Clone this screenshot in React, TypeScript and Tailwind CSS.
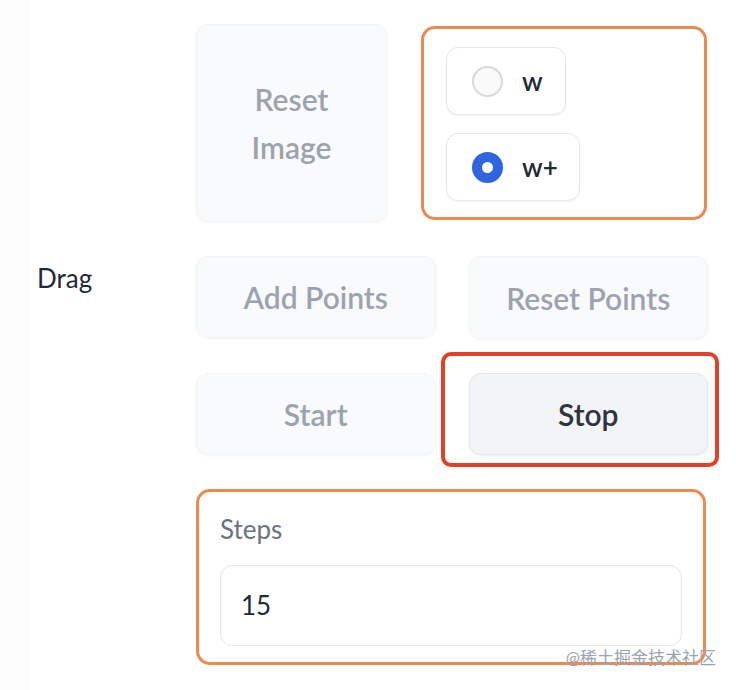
import React from "react";

const font = { fontFamily: "Lato, 'Noto Sans', 'Noto Sans CJK SC', sans-serif" };

type BtnProps = {
  label: React.ReactNode;
  active?: boolean;
  className?: string;
};

const Btn = ({ label, active, className }: BtnProps) => (
  <button
    className={
      "flex items-center justify-center rounded-[12px] border text-[30px] font-semibold leading-[48px] " +
      (active
        ? "border-[#e5e7eb] bg-[#f3f4f6] text-[#2f3441] shadow-[0_1px_3px_rgba(0,0,0,0.08)] "
        : "border-[#f3f4f6] bg-[#f9fafb] text-[#9ca3af] shadow-[0_1px_3px_rgba(0,0,0,0.04)] ") +
      (className ?? "")
    }
  >
    {label}
  </button>
);

const Radio = ({ label, checked, width }: { label: string; checked?: boolean; width: string }) => (
  <label
    className={
      "flex h-[68px] items-center gap-[19px] rounded-[12px] border border-[#e5e7eb] bg-white pl-[25px] shadow-[0_1px_2px_rgba(0,0,0,0.05)] " +
      width
    }
  >
    {checked ? (
      <span className="flex size-[31px] items-center justify-center rounded-full bg-[#2f66e0]">
        <span className="size-[11px] rounded-full bg-white" />
      </span>
    ) : (
      <span className="size-[31px] rounded-full border-2 border-[#d7d9dd] bg-[#fafafa]" />
    )}
    <span className="text-[26px] font-semibold text-[#1f2937]">{label}</span>
  </label>
);

export default function App() {
  return (
    <div className="flex h-[690px] w-[736px] bg-white" style={font}>
      <div className="w-[31px] bg-[#fcfcfc]" />
      <div className="flex w-[165px] items-start pt-[259px] pl-[6px]">
        <span className="text-[26px] text-[#1f2937]">Drag</span>
      </div>
      <div className="relative flex w-[512px] flex-col gap-[34px] pt-[24px]">
        <div className="flex gap-[34px]">
          <Btn label={<span className="text-center">Reset<br />Image</span>} className="h-[198px] w-[191px]" />
          <div className="mt-[2px] flex h-[194px] w-[286px] flex-col gap-[18px] rounded-[14px] border-[3px] border-[#e98b51] px-[22px] pt-[18px]">
            <Radio label="w" width="w-[120px]" />
            <Radio label="w+" checked width="w-[134px]" />
          </div>
        </div>
        <div className="grid grid-cols-2 gap-x-[33px] gap-y-[34px]">
          <Btn label="Add Points" className="h-[82px]" />
          <Btn label="Reset Points" className="h-[83px]" />
          <Btn label="Start" className="h-[82px]" />
          <div className="relative">
            <Btn label="Stop" active className="h-[82px] w-full" />
            <div className="absolute -top-[21px] -right-[11px] -bottom-[12px] -left-[28px] rounded-[10px] border-4 border-[#e3402a]" />
          </div>
        </div>
        <div className="flex h-[176px] w-[510px] flex-col rounded-[14px] border-[3px] border-[#e98b51] px-[21px] pt-[19px]">
          <span className="text-[26px] leading-[36px] text-[#6b7280]">Steps</span>
          <div className="mt-[18px] flex h-[81px] items-center rounded-[12px] border border-[#e5e7eb] px-[20px] shadow-[inset_0_1px_2px_rgba(0,0,0,0.05)]">
            <span className="text-[26px] text-[#1f2937]">15</span>
          </div>
        </div>
        <span className="absolute top-[645px] right-[-8px] text-[17px] text-[#9ca3af]">@稀土掘金技术社区</span>
      </div>
    </div>
  );
}
